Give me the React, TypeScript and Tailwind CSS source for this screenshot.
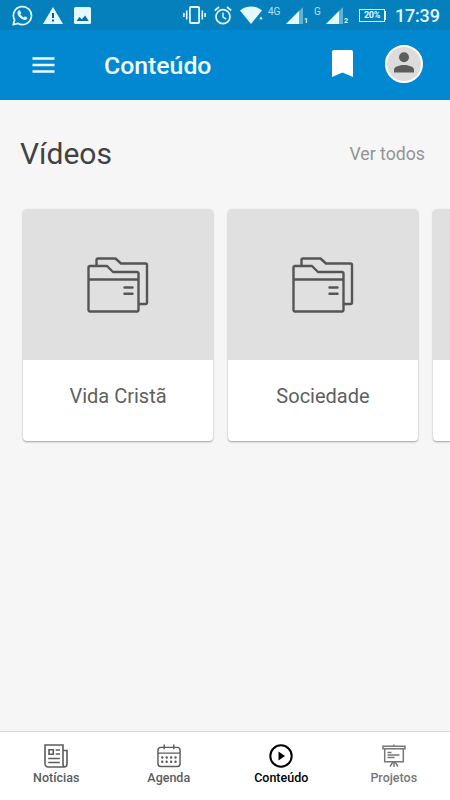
import type React from "react";

type IconProps = {
  className?: string;
};

const WhatsappIcon: React.FC<IconProps> = ({ className }) => (
  <svg viewBox="0 0 21 21" className={className} fill="none">
    <path
      d="M1.2 19.8 2.6 15A9 9 0 1 1 6 18.4Z"
      stroke="currentColor"
      strokeWidth="1.700"
      strokeLinejoin="round"
    />
    <path
      d="M6 6.200c.5-.9 1.500-1.100 2.100-.5l1.200 2.300-.9 1.300c.8 1.500 1.700 2.400 3.200 3.100l1.300-1.200 2.500 1.200c.2 1.600-1.300 2.700-2.900 2.500C9 14.400 5.600 10.900 5.400 8c0-.7.200-1.300.6-1.800Z"
      fill="currentColor"
    />
  </svg>
);

const WarningIcon: React.FC<IconProps> = ({ className }) => (
  <svg viewBox="0 0 20 17" className={className}>
    <path d="M10 0 20 17H0Z" fill="currentColor" />
    <path d="M9 6h2v5H9ZM9 12.500h2v2H9Z" fill="#0b5c85" />
  </svg>
);

const PictureIcon: React.FC<IconProps> = ({ className }) => (
  <svg viewBox="0 0 17 17" className={className}>
    <rect width="17" height="17" rx="1.500" fill="currentColor" />
    <path d="m2.500 14 3-4 2.300 2.300L11.200 8.500l3.500 5.500Z" fill="#0b6b9c" />
  </svg>
);

const VibrateIcon: React.FC<IconProps> = ({ className }) => (
  <svg viewBox="0 0 23 18" className={className} fill="none">
    <rect x="6.900" y="1" width="9.200" height="16" rx="1" stroke="currentColor" strokeWidth="1.800" />
    <path
      d="M.9 7v4M3.700 4.500v9M22.100 7v4M19.300 4.500v9"
      stroke="currentColor"
      strokeWidth="1.600"
    />
  </svg>
);

const AlarmIcon: React.FC<IconProps> = ({ className }) => (
  <svg viewBox="0 0 18 19" className={className} fill="none" stroke="currentColor">
    <circle cx="9" cy="10.700" r="7" strokeWidth="1.700" />
    <path d="M9 6.500v4.700l3.200 2" strokeWidth="1.400" />
    <path d="M.8 4.500 5 1M17.200 4.500 13 1" strokeWidth="1.700" />
  </svg>
);

const WifiIcon: React.FC<IconProps> = ({ className }) => (
  <svg viewBox="0 0 23 18" className={className} fill="currentColor">
    <path d="M0 4.500C6-1 16-1 22 4.500L11 18Z" />
    <path d="m21 10.500 1.700 2.800h-3.400Z" />
  </svg>
);

const SignalIcon: React.FC<IconProps> = ({ className }) => (
  <svg viewBox="0 0 17 17" className={className} fill="currentColor">
    <path d="M17 0v17H0Z" opacity=".4" />
    <path d="M13 4v13H0Z" />
  </svg>
);

const MenuIcon: React.FC<IconProps> = ({ className }) => (
  <svg viewBox="0 0 22 16" className={className} stroke="currentColor" strokeWidth="2.400">
    <path d="M0 1.500h22M0 8h22M0 14.500h22" />
  </svg>
);

const BookmarkIcon: React.FC<IconProps> = ({ className }) => (
  <svg viewBox="0 0 21 27" className={className} fill="currentColor">
    <path d="M2 0h17a2 2 0 0 1 2 2v25l-10.500-4.500L0 27V2a2 2 0 0 1 2-2Z" />
  </svg>
);

const PersonIcon: React.FC<IconProps> = ({ className }) => (
  <svg viewBox="0 0 20 21" className={className} fill="currentColor">
    <circle cx="10" cy="5.200" r="5" />
    <path d="M0 20.500v-2.800C0 14.500 6 13 10 13s10 1.500 10 4.700v2.800Z" />
  </svg>
);

const FoldersIcon: React.FC<IconProps> = ({ className }) => (
  <svg
    viewBox="0 0 62 56"
    className={className}
    fill="none"
    stroke="currentColor"
    strokeWidth="2.400"
    strokeLinejoin="round"
    strokeLinecap="round"
  >
    <path d="M9.500 8.500V3a1.500 1.500 0 0 1 1.500-1.500H28.500l5.500 5H58.500a1.500 1.500 0 0 1 1.500 1.500V45.500a1.500 1.500 0 0 1-1.500 1.500H52" />
    <path d="M3 9H20l6 6H50a1.500 1.500 0 0 1 1.500 1.500V53a1.500 1.500 0 0 1-1.500 1.500H3a1.500 1.500 0 0 1-1.500-1.500V10.500A1.500 1.500 0 0 1 3 9ZM1.500 22.500H51.500" />
    <path d="M37.500 30.500h8M37.500 36.800h8" />
  </svg>
);

const NewsIcon: React.FC<IconProps> = ({ className }) => (
  <svg viewBox="0 0 24 24" className={className} fill="none" stroke="currentColor" strokeWidth="1.600">
    <path d="M19 19.500V1H1v18.500A3.300 3.300 0 0 0 4.300 23H20a3 3 0 0 0 3-3V6.500h-4v13c0 2 .7 3.500 2 3.500" />
    <path d="M5 5.700h4.300v4.600H5ZM11.700 6H16M11.700 10H16M4.200 14.500h11.600M4.200 18.500h11.600" />
  </svg>
);

const CalendarIcon: React.FC<IconProps> = ({ className }) => (
  <svg viewBox="0 0 25 24" className={className} fill="none" stroke="currentColor" strokeWidth="1.500">
    <rect x="1" y="3" width="23" height="20" rx="3" />
    <path d="M1 9h23M7.500 0v5M17.500 0v5" />
    <path
      d="M5.500 13.500h15M5.500 18h15"
      strokeWidth="2.600"
      strokeLinecap="round"
      strokeDasharray="0 4.600"
    />
  </svg>
);

const PlayIcon: React.FC<IconProps> = ({ className }) => (
  <svg viewBox="0 0 24 24" className={className}>
    <circle cx="12" cy="12" r="10.700" fill="none" stroke="currentColor" strokeWidth="2" />
    <path d="m9.500 7.500 6.500 4.500-6.500 4.500Z" fill="currentColor" />
  </svg>
);

const BoardIcon: React.FC<IconProps> = ({ className }) => (
  <svg viewBox="0 0 24 24" className={className} fill="none" stroke="currentColor" strokeWidth="1.500">
    <path d="M1 2.200h22v2.600H1ZM2.700 4.700v13h18.600v-13M12 .5v2" />
    <path d="M5.500 8.500h4M5.500 11h12M5.500 13.500h7" strokeWidth="1.300" />
    <path d="M12 17.500v5.500M11.200 17.500l-3.200 5M12.800 17.500l3.200 5" />
  </svg>
);

const StatusBar: React.FC = () => (
  <div className="flex h-[30px] shrink-0 items-center bg-[#0580bd] pl-3 text-[#e3f9ff]">
    <WhatsappIcon className="h-[21px] w-[21px]" />
    <WarningIcon className="ml-[10px] h-[17px] w-5" />
    <PictureIcon className="ml-[11px] h-[17px] w-[17px]" />
    <VibrateIcon className="ml-[92px] h-[18px] w-[23px]" />
    <AlarmIcon className="ml-2 h-[19px] w-[18px]" />
    <WifiIcon className="ml-2 h-[18px] w-[23px]" />
    <span className="ml-[5px] h-[18px] w-[14px] text-[10px] leading-3 opacity-80">4G</span>
    <SignalIcon className="ml-1 h-[17px] w-[17px]" />
    <span className="ml-px w-[10px] pt-3 text-[7px] leading-none font-bold">1</span>
    <span className="h-[18px] w-2 text-[10px] leading-3 opacity-80">G</span>
    <SignalIcon className="ml-1 h-[17px] w-[17px]" />
    <span className="ml-px w-[15px] pt-3 text-[7px] leading-none font-bold">2</span>
    <span className="flex h-[13px] w-[26px] items-center justify-center border border-current text-[9px] leading-none font-bold tracking-[-0.4px]">
      20%
    </span>
    <span className="h-[9px] w-px bg-current" />
    <span className="ml-[9px] pt-0.5 text-[18px] leading-none font-medium tracking-[-0.2px]">
      17:39
    </span>
  </div>
);

const AppBar: React.FC = () => (
  <header className="flex h-[70px] shrink-0 items-center bg-[#0288d1] pl-8 text-[#f0fcff]">
    <button className="mt-[-1px]">
      <MenuIcon className="h-4 w-[23px]" />
    </button>
    <h1 className="ml-[49px] w-[228px] pt-0.5 text-[24.800px] leading-none font-medium">Conteúdo</h1>
    <button className="mb-1 text-white">
      <BookmarkIcon className="h-[27px] w-[21px]" />
    </button>
    <div className="mb-[3px] ml-8 flex h-[38px] w-[38px] items-center justify-center rounded-full border-[2.500px] border-white bg-[#dcdcdc]">
      <PersonIcon className="mb-0.5 h-[21px] w-5 text-[#5d5d5d]" />
    </div>
  </header>
);

const VideoCard: React.FC<{ name?: string }> = ({ name }) => (
  <li className="flex h-[232px] w-[190px] shrink-0 flex-col overflow-hidden rounded bg-white shadow-[0_1px_2px_rgba(0,0,0,0.35)]">
    <div className="flex h-[151px] items-center justify-center bg-[#e0e0e0]">
      <FoldersIcon className="h-14 w-[62px] text-[#555]" />
    </div>
    <span className="pt-6 text-center text-[20px] leading-6 text-[#5f5f5f]">{name}</span>
  </li>
);

const tabs = [
  { name: "Notícias", icon: NewsIcon, color: "text-[#5c5c5c]" },
  { name: "Agenda", icon: CalendarIcon, color: "text-[#5c5c5c]" },
  { name: "Conteúdo", icon: PlayIcon, color: "text-black" },
  { name: "Projetos", icon: BoardIcon, color: "text-[#777]" },
];

const TabBar: React.FC = () => (
  <nav className="grid h-[69px] shrink-0 grid-cols-4 border-t border-[#d8d8d8] bg-white">
    {tabs.map(({ name, icon: Icon, color }) => (
      <a key={name} className={`flex flex-col items-center pt-3 ${color}`}>
        <Icon className="h-6 w-6" />
        <span className="mt-0.5 text-[12.500px] leading-4 font-medium">{name}</span>
      </a>
    ))}
  </nav>
);

const App: React.FC = () => (
  <div className="flex h-screen w-full flex-col overflow-hidden bg-[#f6f6f6] font-[Roboto,sans-serif]">
    <StatusBar />
    <AppBar />
    <main className="grow overflow-hidden">
      <div className="flex h-[109px] items-center justify-between pr-[25px] pl-5">
        <h2 className="pb-0.5 text-[30px] leading-none text-[#424242]">Vídeos</h2>
        <a className="text-[17.700px] leading-none text-[#949494]">Ver todos</a>
      </div>
      <ul className="flex gap-[15px] pb-2 pl-[23px]">
        <VideoCard name="Vida Cristã" />
        <VideoCard name="Sociedade" />
        <VideoCard />
      </ul>
    </main>
    <TabBar />
  </div>
);

export default App;
